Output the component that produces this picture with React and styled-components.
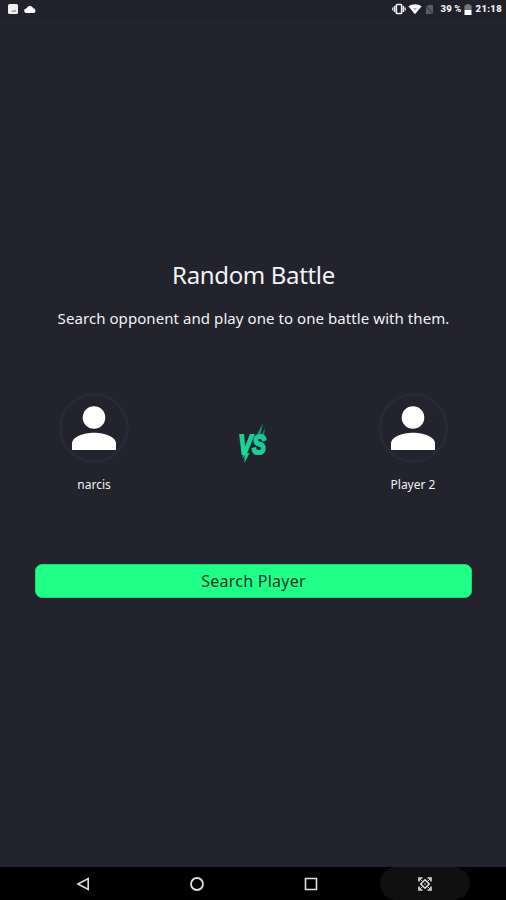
import styled, { createGlobalStyle } from "styled-components";

const GlobalStyle = createGlobalStyle`
  * {
    box-sizing: border-box;
  }
  body {
    margin: 0;
    background: #22232d;
  }
  h1,
  p {
    margin: 0;
    font-weight: 400;
  }
`;
const Screen = styled.div`
  width: 100%;
  height: 900px;
  display: flex;
  flex-direction: column;
  overflow: hidden;
  background: #22232d;
  color: #f2f2f4;
  font-family: "Noto Sans", "Liberation Sans", sans-serif;
`;
const StatusBar = styled.header`
  height: 18px;
  padding: 0 4px 0 7px;
  display: flex;
  align-items: center;
  justify-content: space-between;
  background: #20212b;
`;
const StatusGroup = styled.div`
  display: flex;
  align-items: center;
  gap: ${({ $gap }) => $gap}px;
`;
const StatusText = styled.span`
  margin-left: ${({ $offset }) => $offset || 0}px;
  font-family: "Roboto", "Liberation Sans", sans-serif;
  font-size: 9.5px;
  line-height: 12px;
  font-weight: 900;
  letter-spacing: 0.3px;
  word-spacing: -0.5px;
  white-space: nowrap;
`;
const Main = styled.main`
  flex: 1;
  padding: 242px 34px 0 35px;
`;
const Title = styled.h1`
  font-size: 24px;
  line-height: 30px;
  letter-spacing: -0.35px;
  text-align: center;
  white-space: nowrap;
`;
const Subtitle = styled.p`
  margin-top: 17px;
  font-size: 15px;
  line-height: 22px;
  letter-spacing: 0.07px;
  text-align: center;
  white-space: nowrap;
`;
const Versus = styled.section`
  margin-top: 64px;
  height: 102px;
  padding: 0 24px;
  display: flex;
  justify-content: space-between;
`;
const PlayerCard = styled.div`
  width: 70px;
  display: flex;
  flex-direction: column;
  align-items: center;
`;
const Avatar = styled.div`
  width: 70px;
  height: 70px;
  border: 3px solid #262a34;
  border-radius: 50%;
  display: flex;
  align-items: center;
  justify-content: center;
`;
const PlayerName = styled.p`
  margin-top: 13px;
  font-size: 12px;
  line-height: 18px;
  white-space: nowrap;
`;
const VsLogo = styled.svg`
  margin-top: 27px;
  overflow: visible;
`;
const SearchButton = styled.button`
  display: block;
  width: 100%;
  height: 34px;
  margin-top: 69px;
  padding: 0;
  border: 1px solid #1bd873;
  border-radius: 7px;
  background: #20ff87;
  color: #14382c;
  font-family: inherit;
  font-size: 16px;
  line-height: 30px;
  letter-spacing: 0.25px;
`;
const NavBar = styled.nav`
  height: 33px;
  padding-left: 38px;
  display: flex;
  background: #000;
`;
const NavButton = styled.div`
  width: 90px;
  height: 33px;
  margin-right: 24px;
  flex-shrink: 0;
  border-radius: 17px;
  display: flex;
  align-items: center;
  justify-content: center;
  background: ${({ $active }) => ($active ? "#101010" : "transparent")};
`;

const PictureIcon = () => (
  <svg width="12" height="12" viewBox="0 0 12 12">
    <rect x="1" y="1" width="10" height="10" rx="1.5" fill="#f0f0f2" />
    <path d="M4 9l1.5-2 1 1L8 6l1.5 3z" fill="#a5a5aa" />
  </svg>
);
const CloudIcon = () => (
  <svg width="14" height="10" viewBox="0 0 14 10">
    <path
      d="M3 9a2.3 2.3 0 0 1 0-4.5h.4a3.6 3.6 0 0 1 6.8-.3A2.5 2.5 0 0 1 11 9z"
      fill="#fff"
    />
  </svg>
);
const VibrateIcon = () => (
  <svg width="14" height="12" viewBox="0 0 14 12" fill="none" stroke="#f0f0f2">
    <rect x="4.3" y="1.5" width="5.4" height="9" rx="1" strokeWidth="1.7" />
    <path d="M2.5 3v6M11.5 3v6" strokeWidth="1.3" />
    <path d="M.8 4.5v3M13.2 4.5v3" strokeWidth="1.2" />
  </svg>
);
const WifiIcon = () => (
  <svg width="14" height="12" viewBox="0 0 14 12">
    <path d="M.4 3.2C4.2.5 9.8.5 13.6 3.2L7 11.3z" fill="#f7f7f8" />
    <path d="M5.5 5.5h3M7 5.5v2" stroke="#a9a9ae" fill="none" />
  </svg>
);
const NoSimIcon = () => (
  <svg width="9" height="11" viewBox="0 0 9 11">
    <path d="M3 1h5v9H1V3z" fill="#5b5c65" />
    <path d="M.5 1.5l8 9" stroke="#30313a" strokeWidth="1.1" />
  </svg>
);
const BatteryIcon = () => (
  <svg width="8" height="11" viewBox="0 0 8 11">
    <path d="M2.5 0h3v1.2h2V6h-7V1.2h2z" fill="#75757d" />
    <path d="M.5 6h7v5h-7z" fill="#fff" />
  </svg>
);
const PersonIcon = () => (
  <svg width="46" height="46" viewBox="0 0 46 46" fill="#fff">
    <circle cx="23" cy="12.5" r="11.3" />
    <path d="M1 45v-6.5C1 32 12 27.7 23 27.7S45 32 45 38.5V45z" />
  </svg>
);

const Player = ({ name }) => (
  <PlayerCard>
    <Avatar>
      <PersonIcon />
    </Avatar>
    <PlayerName>{name}</PlayerName>
  </PlayerCard>
);

const VsBadge = () => (
  <VsLogo width="40" height="50" viewBox="0 0 40 50">
    <defs>
      <linearGradient id="vs" x1="0" y1="1" x2="0.8" y2="0">
        <stop offset="0" stopColor="#18e08f" />
        <stop offset="1" stopColor="#1fc0a0" />
      </linearGradient>
    </defs>
    <path d="M29 3l-6.5 12h4zM31 8l-4 8h3z" fill="#178a72" />
    <path d="M10.5 43l5-10h-5zM8.500 39l3-6H9z" fill="#19c98a" />
    <text
      transform="translate(4.500 34) scale(0.82 1.08)"
      fontFamily="Liberation Sans, sans-serif"
      fontSize="25"
      fontWeight="700"
      fontStyle="italic"
      fill="url(#vs)"
      stroke="url(#vs)"
      strokeWidth="2"
    >
      VS
    </text>
  </VsLogo>
);

const App = () => {
  return (
    <>
      <GlobalStyle />
      <Screen>
        <StatusBar>
          <StatusGroup $gap={4}>
            <PictureIcon />
            <CloudIcon />
          </StatusGroup>
          <StatusGroup $gap={2.5}>
            <VibrateIcon />
            <WifiIcon />
            <NoSimIcon />
            <StatusText $offset={4}>39 %</StatusText>
            <BatteryIcon />
            <StatusText $offset={1}>21:18</StatusText>
          </StatusGroup>
        </StatusBar>
        <Main>
          <Title>Random Battle</Title>
          <Subtitle>
            Search opponent and play one to one battle with them.
          </Subtitle>
          <Versus>
            <Player name="narcis" />
            <VsBadge />
            <Player name="Player 2" />
          </Versus>
          <SearchButton>Search Player</SearchButton>
        </Main>
        <NavBar>
          <NavButton>
            <svg width="14" height="14" viewBox="0 0 14 14">
              <path
                d="M12.2 1.500v11L2 7z"
                fill="none"
                stroke="#dedede"
                strokeWidth="1.6"
              />
            </svg>
          </NavButton>
          <NavButton>
            <svg width="14" height="14" viewBox="0 0 14 14">
              <circle
                cx="7"
                cy="7"
                r="6"
                fill="none"
                stroke="#dedede"
                strokeWidth="1.8"
              />
            </svg>
          </NavButton>
          <NavButton>
            <svg width="14" height="14" viewBox="0 0 14 14">
              <path
                d="M1.5 1.5h11v11h-11z"
                fill="none"
                stroke="#dedede"
                strokeWidth="1.6"
              />
            </svg>
          </NavButton>
          <NavButton $active>
            <svg
              width="14"
              height="14"
              viewBox="0 0 14 14"
              fill="none"
              stroke="#dedede"
              strokeWidth="1.6"
            >
              <path d="M1 4.500V1h3.500M9.500 1H13v3.500M13 9.500V13H9.500M4.500 13H1V9.500" />
              <path d="M7 2.800L11.200 7 7 11.200 2.800 7z" />
              <path d="M1.500 1.500l3 3M12.500 1.500l-3 3M12.500 12.500l-3-3M1.500 12.500l3-3" strokeWidth="1" />
              <circle cx="7" cy="7" r="0.8" fill="#dedede" stroke="none" />
            </svg>
          </NavButton>
        </NavBar>
      </Screen>
    </>
  );
};

export default App;
